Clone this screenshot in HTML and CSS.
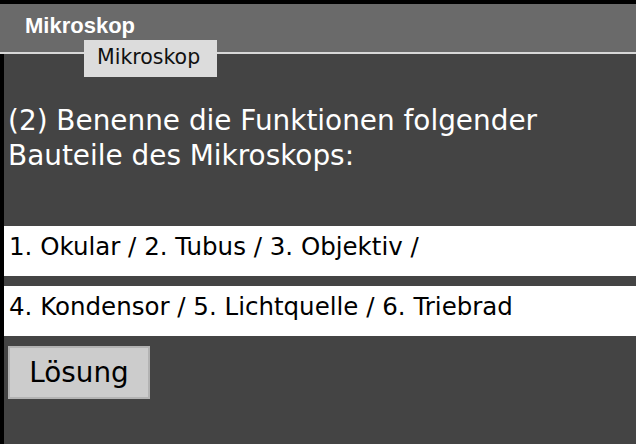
FILE: index.html
```html
<!DOCTYPE html>
<html lang="de">
<head>
  <meta charset="UTF-8" />
  <meta name="viewport" content="width=device-width, initial-scale=1.0"/>
  <title>Mikroskop</title>
  <link rel="stylesheet" href="styles.css">
</head>
<body>
  <header class="topbar">
    <span class="topbar-title">Mikroskop</span>
  </header>
  <div class="tooltip">Mikroskop</div>

  <main class="page">
    <h2 class="task">(2) Benenne die Funktionen folgender Bauteile des Mikroskops:</h2>

    <div class="answer">1. Okular / 2. Tubus / 3. Objektiv /</div>
    <div class="answer">4. Kondensor / 5. Lichtquelle / 6. Triebrad</div>

    <button class="solution">Lösung</button>
  </main>
</body>
</html>
```

FILE: styles.css
```css
* { box-sizing: border-box; }
html, body {
  height: 100%;
}
body {
  margin: 0;
  padding-top: 4px;
  background: #000;
  font-family: "DejaVu Sans", Verdana, sans-serif;
  display: flex;
  flex-direction: column;
}
.topbar {
  height: 50px;
  padding: 0 0 4px 25px;
  background: #6a6a6a;
  border-bottom: 2px solid #d8d8d8;
}
.topbar-title {
  font-family: "Liberation Sans", Arial, sans-serif;
  font-weight: bold;
  font-size: 22px;
  line-height: 44px;
  color: #fff;
}
.tooltip {
  position: absolute;
  top: 40px;
  left: 84px;
  width: 133px;
  height: 37px;
  padding-left: 13px;
  background: #dcdcdc;
  color: #111;
  font-size: 20.5px;
  line-height: 34px;
}
.page {
  flex: 1;
  margin-left: 4px;
  padding-top: 49px;
  background: #444;
}
.task {
  margin: 0 0 53px;
  padding: 0 4px;
  font-size: 27.9px;
  font-weight: normal;
  line-height: 35px;
  color: #fff;
}
.answer {
  height: 50px;
  margin-bottom: 10px;
  padding: 2px 5px 11px;
  background: #fff;
  color: #000;
  font-size: 24.5px;
  line-height: 37px;
  white-space: nowrap;
}
.solution {
  display: block;
  width: 142px;
  height: 53px;
  margin: 3px 0 0 4px;
  padding: 0;
  background: #cccccc;
  border: 2px solid #b3b3b3;
  color: #000;
  font-family: inherit;
  font-size: 27.8px;
  cursor: pointer;
}
```
